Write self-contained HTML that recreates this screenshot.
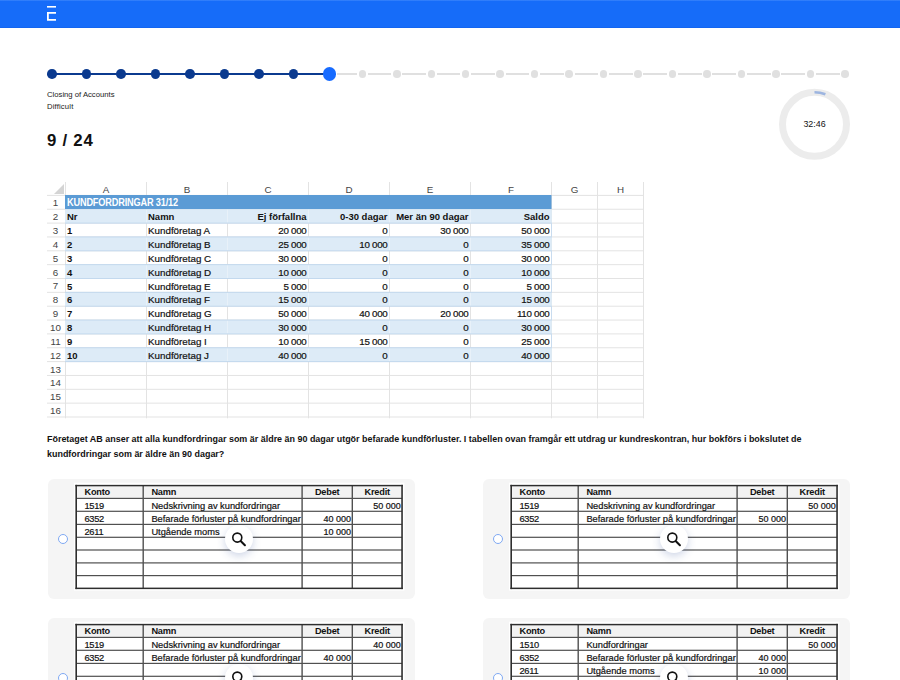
<!DOCTYPE html>
<html lang="sv"><head><meta charset="utf-8"><title>Quiz</title>
<style>
html,body{margin:0;padding:0;background:#fff;}
body{width:900px;height:680px;overflow:hidden;position:relative;font-family:"Liberation Sans",sans-serif;color:#111;}
.abs{position:absolute;}
.hdr{left:0;top:0;width:900px;height:28px;background:linear-gradient(#3d86fb 0,#166cf9 1.5px,#166cf9 26.5px,#1262ec 28px);}
.lbl{left:47px;font-size:7.7px;color:#222;white-space:nowrap;line-height:10px;}
.count{left:47px;top:130.6px;font-size:16.8px;font-weight:700;line-height:20px;color:#111;white-space:nowrap;letter-spacing:0.75px;}
.dot{border-radius:50%;}
.xl{font-size:9.8px;-webkit-text-stroke:0.2px #111;line-height:13.85px;white-space:nowrap;color:#111;}
.xl b{font-size:9.5px;-webkit-text-stroke:0;}
.xl .tt{font-size:10.4px;letter-spacing:-0.2px;}
.xn{font-size:9.8px;letter-spacing:-0.3px;}
.xh{font-size:9.8px;color:#444;text-align:center;line-height:13px;}
.q{left:47px;top:432px;width:820px;font-size:8.95px;font-weight:700;line-height:15px;color:#111;}
.card{width:367.5px;height:119.5px;background:#f5f5f5;border-radius:6px;}
.radio{width:8px;height:8px;border:1px solid #7fa9f3;border-radius:50%;background:#fff;}
.zoom{width:28px;height:28px;border-radius:50%;background:#fff;box-shadow:0 3px 8px rgba(50,80,150,.24);}
.jt{font-size:9.3px;-webkit-text-stroke:0.2px #111;line-height:13px;white-space:nowrap;color:#111;}
.jt b{font-size:9.2px;letter-spacing:-0.2px;-webkit-text-stroke:0;}
.ja{letter-spacing:-0.3px;}
.jn{font-size:9px;}
</style></head><body>
<div class="abs hdr"></div>
<svg class="abs" style="left:47px;top:6px" width="10" height="16" viewBox="0 0 10 16"><rect x="0" y="0" width="9" height="1.6" fill="#fff"/><path d="M9 6.8H0.9V13.8H9" fill="none" stroke="#fff" stroke-width="1.8"/></svg>

<div class="abs" style="left:52px;top:72.7px;width:275.8px;height:2.4px;background:#0b3a8f"></div>
<div class="abs dot" style="left:47.2px;top:69.1px;width:9.6px;height:9.6px;background:#0b3a8f"></div>
<div class="abs dot" style="left:81.7px;top:69.1px;width:9.6px;height:9.6px;background:#0b3a8f"></div>
<div class="abs dot" style="left:116.2px;top:69.1px;width:9.6px;height:9.6px;background:#0b3a8f"></div>
<div class="abs dot" style="left:150.6px;top:69.1px;width:9.6px;height:9.6px;background:#0b3a8f"></div>
<div class="abs dot" style="left:185.1px;top:69.1px;width:9.6px;height:9.6px;background:#0b3a8f"></div>
<div class="abs dot" style="left:219.6px;top:69.1px;width:9.6px;height:9.6px;background:#0b3a8f"></div>
<div class="abs dot" style="left:254.1px;top:69.1px;width:9.6px;height:9.6px;background:#0b3a8f"></div>
<div class="abs dot" style="left:288.5px;top:69.1px;width:9.6px;height:9.6px;background:#0b3a8f"></div>
<div class="abs dot" style="left:323.0px;top:67.2px;width:13.4px;height:13.4px;background:#176bff"></div>
<div class="abs dot" style="left:358.5px;top:70.1px;width:7.6px;height:7.6px;background:#e0e0e0"></div>
<div class="abs" style="left:337.3px;top:73px;width:19.7px;height:1.8px;background:#e0e0e0"></div>
<div class="abs dot" style="left:393.0px;top:70.1px;width:7.6px;height:7.6px;background:#e0e0e0"></div>
<div class="abs" style="left:367.6px;top:73px;width:23.9px;height:1.8px;background:#e0e0e0"></div>
<div class="abs dot" style="left:427.5px;top:70.1px;width:7.6px;height:7.6px;background:#e0e0e0"></div>
<div class="abs" style="left:402.1px;top:73px;width:23.9px;height:1.8px;background:#e0e0e0"></div>
<div class="abs dot" style="left:461.9px;top:70.1px;width:7.6px;height:7.6px;background:#e0e0e0"></div>
<div class="abs" style="left:436.6px;top:73px;width:23.9px;height:1.8px;background:#e0e0e0"></div>
<div class="abs dot" style="left:496.4px;top:70.1px;width:7.6px;height:7.6px;background:#e0e0e0"></div>
<div class="abs" style="left:471.0px;top:73px;width:23.9px;height:1.8px;background:#e0e0e0"></div>
<div class="abs dot" style="left:530.9px;top:70.1px;width:7.6px;height:7.6px;background:#e0e0e0"></div>
<div class="abs" style="left:505.5px;top:73px;width:23.9px;height:1.8px;background:#e0e0e0"></div>
<div class="abs dot" style="left:565.4px;top:70.1px;width:7.6px;height:7.6px;background:#e0e0e0"></div>
<div class="abs" style="left:540.0px;top:73px;width:23.9px;height:1.8px;background:#e0e0e0"></div>
<div class="abs dot" style="left:599.9px;top:70.1px;width:7.6px;height:7.6px;background:#e0e0e0"></div>
<div class="abs" style="left:574.5px;top:73px;width:23.9px;height:1.8px;background:#e0e0e0"></div>
<div class="abs dot" style="left:634.3px;top:70.1px;width:7.6px;height:7.6px;background:#e0e0e0"></div>
<div class="abs" style="left:609.0px;top:73px;width:23.9px;height:1.8px;background:#e0e0e0"></div>
<div class="abs dot" style="left:668.8px;top:70.1px;width:7.6px;height:7.6px;background:#e0e0e0"></div>
<div class="abs" style="left:643.4px;top:73px;width:23.9px;height:1.8px;background:#e0e0e0"></div>
<div class="abs dot" style="left:703.3px;top:70.1px;width:7.6px;height:7.6px;background:#e0e0e0"></div>
<div class="abs" style="left:677.9px;top:73px;width:23.9px;height:1.8px;background:#e0e0e0"></div>
<div class="abs dot" style="left:737.8px;top:70.1px;width:7.6px;height:7.6px;background:#e0e0e0"></div>
<div class="abs" style="left:712.4px;top:73px;width:23.9px;height:1.8px;background:#e0e0e0"></div>
<div class="abs dot" style="left:772.2px;top:70.1px;width:7.6px;height:7.6px;background:#e0e0e0"></div>
<div class="abs" style="left:746.9px;top:73px;width:23.9px;height:1.8px;background:#e0e0e0"></div>
<div class="abs dot" style="left:806.7px;top:70.1px;width:7.6px;height:7.6px;background:#e0e0e0"></div>
<div class="abs" style="left:781.3px;top:73px;width:23.9px;height:1.8px;background:#e0e0e0"></div>
<div class="abs dot" style="left:841.2px;top:70.1px;width:7.6px;height:7.6px;background:#e0e0e0"></div>
<div class="abs" style="left:815.8px;top:73px;width:23.9px;height:1.8px;background:#e0e0e0"></div>
<div class="abs lbl" style="top:89.8px">Closing of Accounts</div>
<div class="abs lbl" style="top:101.7px;letter-spacing:0.15px">Difficult</div>
<div class="abs count">9 / 24</div>
<svg class="abs" style="left:774px;top:84px" width="82" height="82" viewBox="0 0 82 82">
<circle cx="40.5" cy="40.3" r="32" fill="none" stroke="#ececec" stroke-width="7"/>
<path d="M40.5 8.3 A32 32 0 0 1 51.4 10.2" fill="none" stroke="#9db5e0" stroke-width="2.6"/>
<text x="40.5" y="42.8" text-anchor="middle" font-family="Liberation Sans, sans-serif" font-size="8.9" fill="#111">32:46</text>
</svg>
<div class="abs" id="sheet" style="left:0;top:0">
<svg class="abs" style="left:40px;top:178px" width="612" height="246" viewBox="0 0 612 246">
<rect x="7.00" y="16.90" width="596.50" height="1.00" fill="#e3e3e3"/>
<rect x="7.00" y="30.75" width="596.50" height="1.00" fill="#e3e3e3"/>
<rect x="7.00" y="44.60" width="596.50" height="1.00" fill="#e3e3e3"/>
<rect x="7.00" y="58.45" width="596.50" height="1.00" fill="#e3e3e3"/>
<rect x="7.00" y="72.30" width="596.50" height="1.00" fill="#e3e3e3"/>
<rect x="7.00" y="86.15" width="596.50" height="1.00" fill="#e3e3e3"/>
<rect x="7.00" y="100.00" width="596.50" height="1.00" fill="#e3e3e3"/>
<rect x="7.00" y="113.85" width="596.50" height="1.00" fill="#e3e3e3"/>
<rect x="7.00" y="127.70" width="596.50" height="1.00" fill="#e3e3e3"/>
<rect x="7.00" y="141.55" width="596.50" height="1.00" fill="#e3e3e3"/>
<rect x="7.00" y="155.40" width="596.50" height="1.00" fill="#e3e3e3"/>
<rect x="7.00" y="169.25" width="596.50" height="1.00" fill="#e3e3e3"/>
<rect x="7.00" y="183.10" width="596.50" height="1.00" fill="#e3e3e3"/>
<rect x="7.00" y="196.95" width="596.50" height="1.00" fill="#e3e3e3"/>
<rect x="7.00" y="210.80" width="596.50" height="1.00" fill="#e3e3e3"/>
<rect x="7.00" y="224.65" width="596.50" height="1.00" fill="#e3e3e3"/>
<rect x="7.00" y="238.50" width="596.50" height="1.00" fill="#e3e3e3"/>
<rect x="25.00" y="4.00" width="1.00" height="236.30" fill="#e3e3e3"/>
<rect x="106.00" y="4.00" width="1.00" height="236.30" fill="#e3e3e3"/>
<rect x="187.00" y="4.00" width="1.00" height="236.30" fill="#e3e3e3"/>
<rect x="268.00" y="4.00" width="1.00" height="236.30" fill="#e3e3e3"/>
<rect x="349.00" y="4.00" width="1.00" height="236.30" fill="#e3e3e3"/>
<rect x="430.00" y="4.00" width="1.00" height="236.30" fill="#e3e3e3"/>
<rect x="511.00" y="4.00" width="1.00" height="236.30" fill="#e3e3e3"/>
<rect x="557.00" y="4.00" width="1.00" height="236.30" fill="#e3e3e3"/>
<rect x="603.00" y="4.00" width="1.00" height="236.30" fill="#e3e3e3"/>
<rect x="25.00" y="17.00" width="486.50" height="14.25" fill="#5b9bd5"/>
<rect x="25.00" y="31.25" width="486.80" height="13.85" fill="#ddebf7"/>
<rect x="106.00" y="31.75" width="1.00" height="12.85" fill="#e8f1f9"/>
<rect x="187.00" y="31.75" width="1.00" height="12.85" fill="#e8f1f9"/>
<rect x="268.00" y="31.75" width="1.00" height="12.85" fill="#e8f1f9"/>
<rect x="349.00" y="31.75" width="1.00" height="12.85" fill="#e8f1f9"/>
<rect x="430.00" y="31.75" width="1.00" height="12.85" fill="#e8f1f9"/>
<rect x="25.00" y="58.95" width="486.80" height="13.85" fill="#ddebf7"/>
<rect x="106.00" y="59.45" width="1.00" height="12.85" fill="#e8f1f9"/>
<rect x="187.00" y="59.45" width="1.00" height="12.85" fill="#e8f1f9"/>
<rect x="268.00" y="59.45" width="1.00" height="12.85" fill="#e8f1f9"/>
<rect x="349.00" y="59.45" width="1.00" height="12.85" fill="#e8f1f9"/>
<rect x="430.00" y="59.45" width="1.00" height="12.85" fill="#e8f1f9"/>
<rect x="25.00" y="86.65" width="486.80" height="13.85" fill="#ddebf7"/>
<rect x="106.00" y="87.15" width="1.00" height="12.85" fill="#e8f1f9"/>
<rect x="187.00" y="87.15" width="1.00" height="12.85" fill="#e8f1f9"/>
<rect x="268.00" y="87.15" width="1.00" height="12.85" fill="#e8f1f9"/>
<rect x="349.00" y="87.15" width="1.00" height="12.85" fill="#e8f1f9"/>
<rect x="430.00" y="87.15" width="1.00" height="12.85" fill="#e8f1f9"/>
<rect x="25.00" y="114.35" width="486.80" height="13.85" fill="#ddebf7"/>
<rect x="106.00" y="114.85" width="1.00" height="12.85" fill="#e8f1f9"/>
<rect x="187.00" y="114.85" width="1.00" height="12.85" fill="#e8f1f9"/>
<rect x="268.00" y="114.85" width="1.00" height="12.85" fill="#e8f1f9"/>
<rect x="349.00" y="114.85" width="1.00" height="12.85" fill="#e8f1f9"/>
<rect x="430.00" y="114.85" width="1.00" height="12.85" fill="#e8f1f9"/>
<rect x="25.00" y="142.05" width="486.80" height="13.85" fill="#ddebf7"/>
<rect x="106.00" y="142.55" width="1.00" height="12.85" fill="#e8f1f9"/>
<rect x="187.00" y="142.55" width="1.00" height="12.85" fill="#e8f1f9"/>
<rect x="268.00" y="142.55" width="1.00" height="12.85" fill="#e8f1f9"/>
<rect x="349.00" y="142.55" width="1.00" height="12.85" fill="#e8f1f9"/>
<rect x="430.00" y="142.55" width="1.00" height="12.85" fill="#e8f1f9"/>
<rect x="25.00" y="169.75" width="486.80" height="13.85" fill="#ddebf7"/>
<rect x="106.00" y="170.25" width="1.00" height="12.85" fill="#e8f1f9"/>
<rect x="187.00" y="170.25" width="1.00" height="12.85" fill="#e8f1f9"/>
<rect x="268.00" y="170.25" width="1.00" height="12.85" fill="#e8f1f9"/>
<rect x="349.00" y="170.25" width="1.00" height="12.85" fill="#e8f1f9"/>
<rect x="430.00" y="170.25" width="1.00" height="12.85" fill="#e8f1f9"/>
<rect x="25.00" y="44.60" width="486.80" height="1.00" fill="#c3d9ee"/>
<rect x="25.00" y="58.45" width="486.80" height="1.00" fill="#c3d9ee"/>
<rect x="25.00" y="72.30" width="486.80" height="1.00" fill="#c3d9ee"/>
<rect x="25.00" y="86.15" width="486.80" height="1.00" fill="#c3d9ee"/>
<rect x="25.00" y="100.00" width="486.80" height="1.00" fill="#c3d9ee"/>
<rect x="25.00" y="113.85" width="486.80" height="1.00" fill="#c3d9ee"/>
<rect x="25.00" y="127.70" width="486.80" height="1.00" fill="#c3d9ee"/>
<rect x="25.00" y="141.55" width="486.80" height="1.00" fill="#c3d9ee"/>
<rect x="25.00" y="155.40" width="486.80" height="1.00" fill="#c3d9ee"/>
<rect x="25.00" y="169.25" width="486.80" height="1.00" fill="#c3d9ee"/>
<rect x="25.00" y="183.10" width="486.80" height="1.00" fill="#c3d9ee"/>
<rect x="511.00" y="45.10" width="1.00" height="13.85" fill="#c9dcef"/>
<rect x="511.00" y="72.80" width="1.00" height="13.85" fill="#c9dcef"/>
<rect x="511.00" y="100.50" width="1.00" height="13.85" fill="#c9dcef"/>
<rect x="511.00" y="128.20" width="1.00" height="13.85" fill="#c9dcef"/>
<rect x="511.00" y="155.90" width="1.00" height="13.85" fill="#c9dcef"/>
</svg>
<svg class="abs" style="left:54px;top:184px" width="10" height="10"><path d="M10 0V10H0Z" fill="#d4d4d4"/></svg>
<div class="abs xh" style="left:65.5px;top:183px;width:81.0px">A</div>
<div class="abs xh" style="left:146.5px;top:183px;width:81.0px">B</div>
<div class="abs xh" style="left:227.5px;top:183px;width:81.0px">C</div>
<div class="abs xh" style="left:308.5px;top:183px;width:81.0px">D</div>
<div class="abs xh" style="left:389.5px;top:183px;width:81.0px">E</div>
<div class="abs xh" style="left:470.5px;top:183px;width:81.0px">F</div>
<div class="abs xh" style="left:551.5px;top:183px;width:46.0px">G</div>
<div class="abs xh" style="left:597.5px;top:183px;width:46.0px">H</div>
<div class="abs xh" style="left:47px;top:196.30px;width:17px;line-height:13.85px">1</div>
<div class="abs xh" style="left:47px;top:210.15px;width:17px;line-height:13.85px">2</div>
<div class="abs xh" style="left:47px;top:224.00px;width:17px;line-height:13.85px">3</div>
<div class="abs xh" style="left:47px;top:237.85px;width:17px;line-height:13.85px">4</div>
<div class="abs xh" style="left:47px;top:251.70px;width:17px;line-height:13.85px">5</div>
<div class="abs xh" style="left:47px;top:265.55px;width:17px;line-height:13.85px">6</div>
<div class="abs xh" style="left:47px;top:279.40px;width:17px;line-height:13.85px">7</div>
<div class="abs xh" style="left:47px;top:293.25px;width:17px;line-height:13.85px">8</div>
<div class="abs xh" style="left:47px;top:307.10px;width:17px;line-height:13.85px">9</div>
<div class="abs xh" style="left:47px;top:320.95px;width:17px;line-height:13.85px">10</div>
<div class="abs xh" style="left:47px;top:334.80px;width:17px;line-height:13.85px">11</div>
<div class="abs xh" style="left:47px;top:348.65px;width:17px;line-height:13.85px">12</div>
<div class="abs xh" style="left:47px;top:362.50px;width:17px;line-height:13.85px">13</div>
<div class="abs xh" style="left:47px;top:376.35px;width:17px;line-height:13.85px">14</div>
<div class="abs xh" style="left:47px;top:390.20px;width:17px;line-height:13.85px">15</div>
<div class="abs xh" style="left:47px;top:404.05px;width:17px;line-height:13.85px">16</div>
<div class="abs xl" style="left:67.0px;top:196.10px;color:#fff;transform:scaleX(0.885);transform-origin:0 50%"><b class="tt">KUNDFORDRINGAR 31/12</b></div>
<div class="abs xl" style="left:67.0px;top:210.35px"><b>Nr</b></div>
<div class="abs xl" style="left:148.0px;top:210.35px"><b>Namn</b></div>
<div class="abs xl" style="left:227.5px;top:210.35px;width:79.0px;text-align:right"><b>Ej förfallna</b></div>
<div class="abs xl" style="left:308.5px;top:210.35px;width:79.0px;text-align:right"><b>0-30 dagar</b></div>
<div class="abs xl" style="left:389.5px;top:210.35px;width:79.0px;text-align:right"><b>Mer än 90 dagar</b></div>
<div class="abs xl" style="left:470.5px;top:210.35px;width:79.0px;text-align:right"><b>Saldo</b></div>
<div class="abs xl" style="left:67.0px;top:224.20px"><b>1</b></div>
<div class="abs xl" style="left:148.0px;top:224.20px">Kundföretag A</div>
<div class="abs xl xn" style="left:227.5px;top:224.20px;width:79.0px;text-align:right">20 000</div>
<div class="abs xl xn" style="left:308.5px;top:224.20px;width:79.0px;text-align:right">0</div>
<div class="abs xl xn" style="left:389.5px;top:224.20px;width:79.0px;text-align:right">30 000</div>
<div class="abs xl xn" style="left:470.5px;top:224.20px;width:79.0px;text-align:right">50 000</div>
<div class="abs xl" style="left:67.0px;top:238.05px"><b>2</b></div>
<div class="abs xl" style="left:148.0px;top:238.05px">Kundföretag B</div>
<div class="abs xl xn" style="left:227.5px;top:238.05px;width:79.0px;text-align:right">25 000</div>
<div class="abs xl xn" style="left:308.5px;top:238.05px;width:79.0px;text-align:right">10 000</div>
<div class="abs xl xn" style="left:389.5px;top:238.05px;width:79.0px;text-align:right">0</div>
<div class="abs xl xn" style="left:470.5px;top:238.05px;width:79.0px;text-align:right">35 000</div>
<div class="abs xl" style="left:67.0px;top:251.90px"><b>3</b></div>
<div class="abs xl" style="left:148.0px;top:251.90px">Kundföretag C</div>
<div class="abs xl xn" style="left:227.5px;top:251.90px;width:79.0px;text-align:right">30 000</div>
<div class="abs xl xn" style="left:308.5px;top:251.90px;width:79.0px;text-align:right">0</div>
<div class="abs xl xn" style="left:389.5px;top:251.90px;width:79.0px;text-align:right">0</div>
<div class="abs xl xn" style="left:470.5px;top:251.90px;width:79.0px;text-align:right">30 000</div>
<div class="abs xl" style="left:67.0px;top:265.75px"><b>4</b></div>
<div class="abs xl" style="left:148.0px;top:265.75px">Kundföretag D</div>
<div class="abs xl xn" style="left:227.5px;top:265.75px;width:79.0px;text-align:right">10 000</div>
<div class="abs xl xn" style="left:308.5px;top:265.75px;width:79.0px;text-align:right">0</div>
<div class="abs xl xn" style="left:389.5px;top:265.75px;width:79.0px;text-align:right">0</div>
<div class="abs xl xn" style="left:470.5px;top:265.75px;width:79.0px;text-align:right">10 000</div>
<div class="abs xl" style="left:67.0px;top:279.60px"><b>5</b></div>
<div class="abs xl" style="left:148.0px;top:279.60px">Kundföretag E</div>
<div class="abs xl xn" style="left:227.5px;top:279.60px;width:79.0px;text-align:right">5 000</div>
<div class="abs xl xn" style="left:308.5px;top:279.60px;width:79.0px;text-align:right">0</div>
<div class="abs xl xn" style="left:389.5px;top:279.60px;width:79.0px;text-align:right">0</div>
<div class="abs xl xn" style="left:470.5px;top:279.60px;width:79.0px;text-align:right">5 000</div>
<div class="abs xl" style="left:67.0px;top:293.45px"><b>6</b></div>
<div class="abs xl" style="left:148.0px;top:293.45px">Kundföretag F</div>
<div class="abs xl xn" style="left:227.5px;top:293.45px;width:79.0px;text-align:right">15 000</div>
<div class="abs xl xn" style="left:308.5px;top:293.45px;width:79.0px;text-align:right">0</div>
<div class="abs xl xn" style="left:389.5px;top:293.45px;width:79.0px;text-align:right">0</div>
<div class="abs xl xn" style="left:470.5px;top:293.45px;width:79.0px;text-align:right">15 000</div>
<div class="abs xl" style="left:67.0px;top:307.30px"><b>7</b></div>
<div class="abs xl" style="left:148.0px;top:307.30px">Kundföretag G</div>
<div class="abs xl xn" style="left:227.5px;top:307.30px;width:79.0px;text-align:right">50 000</div>
<div class="abs xl xn" style="left:308.5px;top:307.30px;width:79.0px;text-align:right">40 000</div>
<div class="abs xl xn" style="left:389.5px;top:307.30px;width:79.0px;text-align:right">20 000</div>
<div class="abs xl xn" style="left:470.5px;top:307.30px;width:79.0px;text-align:right">110 000</div>
<div class="abs xl" style="left:67.0px;top:321.15px"><b>8</b></div>
<div class="abs xl" style="left:148.0px;top:321.15px">Kundföretag H</div>
<div class="abs xl xn" style="left:227.5px;top:321.15px;width:79.0px;text-align:right">30 000</div>
<div class="abs xl xn" style="left:308.5px;top:321.15px;width:79.0px;text-align:right">0</div>
<div class="abs xl xn" style="left:389.5px;top:321.15px;width:79.0px;text-align:right">0</div>
<div class="abs xl xn" style="left:470.5px;top:321.15px;width:79.0px;text-align:right">30 000</div>
<div class="abs xl" style="left:67.0px;top:335.00px"><b>9</b></div>
<div class="abs xl" style="left:148.0px;top:335.00px">Kundföretag I</div>
<div class="abs xl xn" style="left:227.5px;top:335.00px;width:79.0px;text-align:right">10 000</div>
<div class="abs xl xn" style="left:308.5px;top:335.00px;width:79.0px;text-align:right">15 000</div>
<div class="abs xl xn" style="left:389.5px;top:335.00px;width:79.0px;text-align:right">0</div>
<div class="abs xl xn" style="left:470.5px;top:335.00px;width:79.0px;text-align:right">25 000</div>
<div class="abs xl" style="left:67.0px;top:348.85px"><b>10</b></div>
<div class="abs xl" style="left:148.0px;top:348.85px">Kundföretag J</div>
<div class="abs xl xn" style="left:227.5px;top:348.85px;width:79.0px;text-align:right">40 000</div>
<div class="abs xl xn" style="left:308.5px;top:348.85px;width:79.0px;text-align:right">0</div>
<div class="abs xl xn" style="left:389.5px;top:348.85px;width:79.0px;text-align:right">0</div>
<div class="abs xl xn" style="left:470.5px;top:348.85px;width:79.0px;text-align:right">40 000</div>
</div>
<div class="abs q">Företaget AB anser att alla kundfordringar som är äldre än 90 dagar utgör befarade kundförluster. I tabellen ovan framgår ett utdrag ur kundreskontran, hur bokförs i bokslutet de<br>kundfordringar som är äldre än 90 dagar?</div>
<div class="abs card" style="left:47.7px;top:479.3px"></div>
<div class="abs radio" style="left:58.0px;top:534.1px"></div>
<svg class="abs" style="left:47px;top:479px" width="372" height="122" viewBox="0 0 372 122">
<rect x="27.00" y="3.70" width="330.40" height="107.90" fill="#fff"/>
<rect x="30.20" y="7.60" width="323.85" height="11.40" fill="#f2f2f2"/>
<rect x="29.20" y="18.80" width="325.85" height="1.20" fill="#505050"/>
<rect x="29.20" y="31.70" width="325.85" height="1.20" fill="#505050"/>
<rect x="29.20" y="44.80" width="325.85" height="1.20" fill="#505050"/>
<rect x="29.20" y="57.70" width="325.85" height="1.20" fill="#505050"/>
<rect x="29.20" y="70.40" width="325.85" height="1.20" fill="#505050"/>
<rect x="29.20" y="83.30" width="325.85" height="1.20" fill="#505050"/>
<rect x="29.20" y="96.00" width="325.85" height="1.20" fill="#505050"/>
<rect x="95.50" y="6.60" width="1.40" height="102.75" fill="#505050"/>
<rect x="254.40" y="6.60" width="1.40" height="102.75" fill="#505050"/>
<rect x="304.60" y="6.60" width="1.40" height="102.75" fill="#505050"/>
<rect x="28.40" y="5.85" width="327.45" height="1.50" fill="#2e2e2e"/>
<rect x="28.40" y="108.60" width="327.45" height="1.50" fill="#2e2e2e"/>
<rect x="28.40" y="5.85" width="1.60" height="104.25" fill="#2e2e2e"/>
<rect x="354.25" y="5.85" width="1.60" height="104.25" fill="#2e2e2e"/>
</svg>
<div class="abs jt" style="left:84.5px;top:486.3px"><b>Konto</b></div>
<div class="abs jt" style="left:151.4px;top:486.3px"><b>Namn</b></div>
<div class="abs jt" style="left:302.1px;top:486.3px;width:50.2px;text-align:center"><b>Debet</b></div>
<div class="abs jt" style="left:352.3px;top:486.3px;width:49.8px;text-align:center"><b>Kredit</b></div>
<div class="abs jt ja" style="left:84.5px;top:499.6px">1519</div>
<div class="abs jt" style="left:151.4px;top:499.6px">Nedskrivning av kundfordringar</div>
<div class="abs jt jn" style="left:352.3px;top:499.6px;width:48.5px;text-align:right">50 000</div>
<div class="abs jt ja" style="left:84.5px;top:512.5px">6352</div>
<div class="abs jt" style="left:151.4px;top:512.5px">Befarade förluster på kundfordringar</div>
<div class="abs jt jn" style="left:302.1px;top:512.5px;width:48.9px;text-align:right">40 000</div>
<div class="abs jt ja" style="left:84.5px;top:525.6px">2611</div>
<div class="abs jt" style="left:151.4px;top:525.6px">Utgående moms</div>
<div class="abs jt jn" style="left:302.1px;top:525.6px;width:48.9px;text-align:right">10 000</div>
<div class="abs zoom" style="left:225.3px;top:525.1px"><svg width="28" height="28" viewBox="0 0 28 28"><circle cx="12.3" cy="12.6" r="4.5" fill="none" stroke="#111" stroke-width="1.6"/><path d="M15.9 16.2L19.9 20.2" stroke="#111" stroke-width="2.1" stroke-linecap="round"/></svg></div>
<div class="abs card" style="left:482.7px;top:479.3px"></div>
<div class="abs radio" style="left:493.0px;top:534.1px"></div>
<svg class="abs" style="left:482px;top:479px" width="372" height="122" viewBox="0 0 372 122">
<rect x="27.00" y="3.70" width="330.40" height="107.90" fill="#fff"/>
<rect x="30.20" y="7.60" width="323.85" height="11.40" fill="#f2f2f2"/>
<rect x="29.20" y="18.80" width="325.85" height="1.20" fill="#505050"/>
<rect x="29.20" y="31.70" width="325.85" height="1.20" fill="#505050"/>
<rect x="29.20" y="44.80" width="325.85" height="1.20" fill="#505050"/>
<rect x="29.20" y="57.70" width="325.85" height="1.20" fill="#505050"/>
<rect x="29.20" y="70.40" width="325.85" height="1.20" fill="#505050"/>
<rect x="29.20" y="83.30" width="325.85" height="1.20" fill="#505050"/>
<rect x="29.20" y="96.00" width="325.85" height="1.20" fill="#505050"/>
<rect x="95.50" y="6.60" width="1.40" height="102.75" fill="#505050"/>
<rect x="254.40" y="6.60" width="1.40" height="102.75" fill="#505050"/>
<rect x="304.60" y="6.60" width="1.40" height="102.75" fill="#505050"/>
<rect x="28.40" y="5.85" width="327.45" height="1.50" fill="#2e2e2e"/>
<rect x="28.40" y="108.60" width="327.45" height="1.50" fill="#2e2e2e"/>
<rect x="28.40" y="5.85" width="1.60" height="104.25" fill="#2e2e2e"/>
<rect x="354.25" y="5.85" width="1.60" height="104.25" fill="#2e2e2e"/>
</svg>
<div class="abs jt" style="left:519.5px;top:486.3px"><b>Konto</b></div>
<div class="abs jt" style="left:586.4px;top:486.3px"><b>Namn</b></div>
<div class="abs jt" style="left:737.1px;top:486.3px;width:50.2px;text-align:center"><b>Debet</b></div>
<div class="abs jt" style="left:787.3px;top:486.3px;width:49.8px;text-align:center"><b>Kredit</b></div>
<div class="abs jt ja" style="left:519.5px;top:499.6px">1519</div>
<div class="abs jt" style="left:586.4px;top:499.6px">Nedskrivning av kundfordringar</div>
<div class="abs jt jn" style="left:787.3px;top:499.6px;width:48.5px;text-align:right">50 000</div>
<div class="abs jt ja" style="left:519.5px;top:512.5px">6352</div>
<div class="abs jt" style="left:586.4px;top:512.5px">Befarade förluster på kundfordringar</div>
<div class="abs jt jn" style="left:737.1px;top:512.5px;width:48.9px;text-align:right">50 000</div>
<div class="abs zoom" style="left:660.3px;top:525.1px"><svg width="28" height="28" viewBox="0 0 28 28"><circle cx="12.3" cy="12.6" r="4.5" fill="none" stroke="#111" stroke-width="1.6"/><path d="M15.9 16.2L19.9 20.2" stroke="#111" stroke-width="2.1" stroke-linecap="round"/></svg></div>
<div class="abs card" style="left:47.7px;top:618.3px"></div>
<div class="abs radio" style="left:58.0px;top:673.1px"></div>
<svg class="abs" style="left:47px;top:618px" width="372" height="122" viewBox="0 0 372 122">
<rect x="27.00" y="3.70" width="330.40" height="107.90" fill="#fff"/>
<rect x="30.20" y="7.60" width="323.85" height="11.40" fill="#f2f2f2"/>
<rect x="29.20" y="18.80" width="325.85" height="1.20" fill="#505050"/>
<rect x="29.20" y="31.70" width="325.85" height="1.20" fill="#505050"/>
<rect x="29.20" y="44.80" width="325.85" height="1.20" fill="#505050"/>
<rect x="29.20" y="57.70" width="325.85" height="1.20" fill="#505050"/>
<rect x="29.20" y="70.40" width="325.85" height="1.20" fill="#505050"/>
<rect x="29.20" y="83.30" width="325.85" height="1.20" fill="#505050"/>
<rect x="29.20" y="96.00" width="325.85" height="1.20" fill="#505050"/>
<rect x="95.50" y="6.60" width="1.40" height="102.75" fill="#505050"/>
<rect x="254.40" y="6.60" width="1.40" height="102.75" fill="#505050"/>
<rect x="304.60" y="6.60" width="1.40" height="102.75" fill="#505050"/>
<rect x="28.40" y="5.85" width="327.45" height="1.50" fill="#2e2e2e"/>
<rect x="28.40" y="108.60" width="327.45" height="1.50" fill="#2e2e2e"/>
<rect x="28.40" y="5.85" width="1.60" height="104.25" fill="#2e2e2e"/>
<rect x="354.25" y="5.85" width="1.60" height="104.25" fill="#2e2e2e"/>
</svg>
<div class="abs jt" style="left:84.5px;top:625.3px"><b>Konto</b></div>
<div class="abs jt" style="left:151.4px;top:625.3px"><b>Namn</b></div>
<div class="abs jt" style="left:302.1px;top:625.3px;width:50.2px;text-align:center"><b>Debet</b></div>
<div class="abs jt" style="left:352.3px;top:625.3px;width:49.8px;text-align:center"><b>Kredit</b></div>
<div class="abs jt ja" style="left:84.5px;top:638.6px">1519</div>
<div class="abs jt" style="left:151.4px;top:638.6px">Nedskrivning av kundfordringar</div>
<div class="abs jt jn" style="left:352.3px;top:638.6px;width:48.5px;text-align:right">40 000</div>
<div class="abs jt ja" style="left:84.5px;top:651.5px">6352</div>
<div class="abs jt" style="left:151.4px;top:651.5px">Befarade förluster på kundfordringar</div>
<div class="abs jt jn" style="left:302.1px;top:651.5px;width:48.9px;text-align:right">40 000</div>
<div class="abs zoom" style="left:225.3px;top:664.1px"><svg width="28" height="28" viewBox="0 0 28 28"><circle cx="12.3" cy="12.6" r="4.5" fill="none" stroke="#111" stroke-width="1.6"/><path d="M15.9 16.2L19.9 20.2" stroke="#111" stroke-width="2.1" stroke-linecap="round"/></svg></div>
<div class="abs card" style="left:482.7px;top:618.3px"></div>
<div class="abs radio" style="left:493.0px;top:673.1px"></div>
<svg class="abs" style="left:482px;top:618px" width="372" height="122" viewBox="0 0 372 122">
<rect x="27.00" y="3.70" width="330.40" height="107.90" fill="#fff"/>
<rect x="30.20" y="7.60" width="323.85" height="11.40" fill="#f2f2f2"/>
<rect x="29.20" y="18.80" width="325.85" height="1.20" fill="#505050"/>
<rect x="29.20" y="31.70" width="325.85" height="1.20" fill="#505050"/>
<rect x="29.20" y="44.80" width="325.85" height="1.20" fill="#505050"/>
<rect x="29.20" y="57.70" width="325.85" height="1.20" fill="#505050"/>
<rect x="29.20" y="70.40" width="325.85" height="1.20" fill="#505050"/>
<rect x="29.20" y="83.30" width="325.85" height="1.20" fill="#505050"/>
<rect x="29.20" y="96.00" width="325.85" height="1.20" fill="#505050"/>
<rect x="95.50" y="6.60" width="1.40" height="102.75" fill="#505050"/>
<rect x="254.40" y="6.60" width="1.40" height="102.75" fill="#505050"/>
<rect x="304.60" y="6.60" width="1.40" height="102.75" fill="#505050"/>
<rect x="28.40" y="5.85" width="327.45" height="1.50" fill="#2e2e2e"/>
<rect x="28.40" y="108.60" width="327.45" height="1.50" fill="#2e2e2e"/>
<rect x="28.40" y="5.85" width="1.60" height="104.25" fill="#2e2e2e"/>
<rect x="354.25" y="5.85" width="1.60" height="104.25" fill="#2e2e2e"/>
</svg>
<div class="abs jt" style="left:519.5px;top:625.3px"><b>Konto</b></div>
<div class="abs jt" style="left:586.4px;top:625.3px"><b>Namn</b></div>
<div class="abs jt" style="left:737.1px;top:625.3px;width:50.2px;text-align:center"><b>Debet</b></div>
<div class="abs jt" style="left:787.3px;top:625.3px;width:49.8px;text-align:center"><b>Kredit</b></div>
<div class="abs jt ja" style="left:519.5px;top:638.6px">1510</div>
<div class="abs jt" style="left:586.4px;top:638.6px">Kundfordringar</div>
<div class="abs jt jn" style="left:787.3px;top:638.6px;width:48.5px;text-align:right">50 000</div>
<div class="abs jt ja" style="left:519.5px;top:651.5px">6352</div>
<div class="abs jt" style="left:586.4px;top:651.5px">Befarade förluster på kundfordringar</div>
<div class="abs jt jn" style="left:737.1px;top:651.5px;width:48.9px;text-align:right">40 000</div>
<div class="abs jt ja" style="left:519.5px;top:664.6px">2611</div>
<div class="abs jt" style="left:586.4px;top:664.6px">Utgående moms</div>
<div class="abs jt jn" style="left:737.1px;top:664.6px;width:48.9px;text-align:right">10 000</div>
<div class="abs zoom" style="left:660.3px;top:664.1px"><svg width="28" height="28" viewBox="0 0 28 28"><circle cx="12.3" cy="12.6" r="4.5" fill="none" stroke="#111" stroke-width="1.6"/><path d="M15.9 16.2L19.9 20.2" stroke="#111" stroke-width="2.1" stroke-linecap="round"/></svg></div>
</body></html>
